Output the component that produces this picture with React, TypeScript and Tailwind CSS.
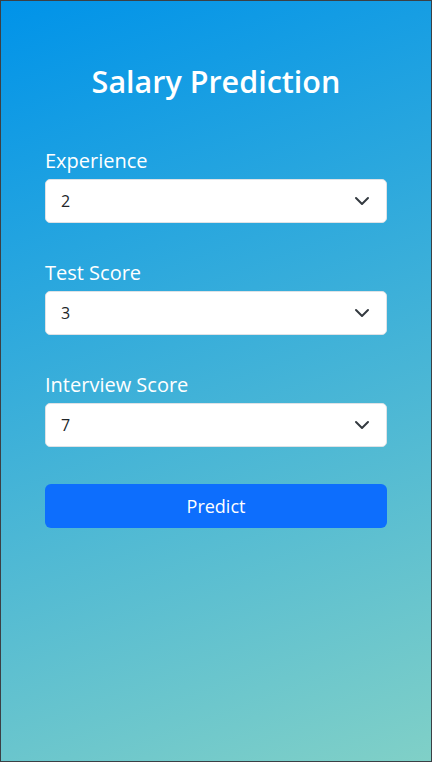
const fields = [
  { label: 'Experience', value: '2' },
  { label: 'Test Score', value: '3' },
  { label: 'Interview Score', value: '7' },
]

function Chevron() {
  return (
    <svg width="16" height="16" viewBox="0 0 16 16" fill="none" className="shrink-0">
      <path d="m2 5 6 6 6-6" stroke="#343a40" strokeWidth="2" strokeLinecap="round" strokeLinejoin="round" />
    </svg>
  )
}

export default function App() {
  return (
    <div
      className="flex h-[762px] w-[432px] flex-col border border-[#3b4045] bg-[linear-gradient(160deg,#0093e9_0%,#80d0c7_100%)] px-[44px] pt-[58px]"
      style={{ fontFamily: '"Open Sans", "Noto Sans", sans-serif' }}
    >
      <h1 className="text-center text-[30.5px] font-semibold leading-[44px] text-white">Salary Prediction</h1>

      <div className="mt-[45px] flex flex-col gap-[37px]">
        {fields.map((f) => (
          <div key={f.label} className="flex flex-col">
            <label className="mb-[5px] text-[20px] leading-[26px] text-white">{f.label}</label>
            <div className="flex h-[44px] items-center justify-between rounded-[5px] border border-[#dee2e6] bg-white pl-[15px] pr-[16px] text-[16px] text-[#212529]">
              <span>{f.value}</span>
              <Chevron />
            </div>
          </div>
        ))}
      </div>

      <button className="mt-[37px] h-[44px] rounded-[6px] bg-[#0d6efd] text-[18px] text-white">Predict</button>
    </div>
  )
}
